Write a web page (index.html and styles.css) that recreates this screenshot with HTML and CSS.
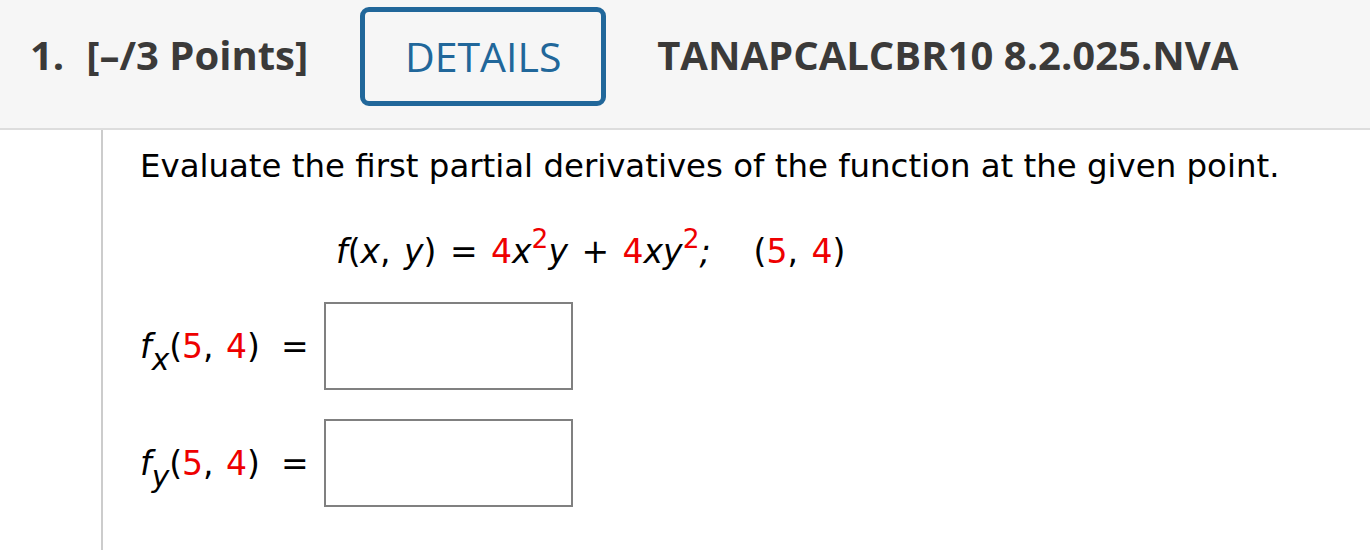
FILE: index.html
```html
<!DOCTYPE html>
<html lang="en">
<head>
<meta charset="utf-8">
<title>Question 1</title>
<link rel="stylesheet" href="styles.css">
</head>
<body>
<header class="qhead">
  <span class="qnum">1.</span>
  <span class="qpts">[–/3 Points]</span>
  <button class="details" type="button">DETAILS</button>
  <span class="qid">TANAPCALCBR10 8.2.025.NVA</span>
</header>
<main class="qbody">
  <div class="gutter"></div>
  <div class="content">
    <p class="prompt">Evaluate the first partial derivatives of the function at the given point.</p>
    <p class="eq"><i>f</i>(<i>x</i>, <i>y</i>) = <span class="red">4</span><i>x</i><sup class="red">2</sup><i>y</i> + <span class="red">4</span><i>xy</i><sup class="red">2</sup><i>;</i><span class="sp"></span>(<span class="red">5</span>, <span class="red">4</span>)</p>
    <div class="answers">
      <div class="row">
        <span class="lbl"><i>f</i><sub><i>x</i></sub>(<span class="red">5</span>, <span class="red">4</span>)</span>
        <span class="eqs">=</span>
        <span class="box"></span>
      </div>
      <div class="row">
        <span class="lbl"><i>f</i><sub><i>y</i></sub>(<span class="red">5</span>, <span class="red">4</span>)</span>
        <span class="eqs">=</span>
        <span class="box"></span>
      </div>
    </div>
  </div>
</main>
</body>
</html>
```

FILE: styles.css
```css
html, body {
  margin: 0;
  padding: 0;
  background: #ffffff;
}

.qhead {
  height: 130px;
  box-sizing: border-box;
  background: #f6f6f6;
  border-bottom: 2px solid #dddddd;
  display: flex;
  align-items: center;
  padding-left: 30px;
  padding-bottom: 16px;
  font-family: "Open Sans", "Liberation Sans", sans-serif;
  font-weight: 700;
  font-size: 40px;
  color: #3b3a39;
}

.qhead > span {
  margin-bottom: 4px;
}

.qnum {
  margin-right: 22px;
}

.qpts {
  margin-right: 52px;
}

.details {
  width: 246px;
  height: 99px;
  box-sizing: border-box;
  border: 5px solid #21679a;
  border-radius: 9px;
  background: #f6f6f6;
  color: #21679a;
  font-family: "Open Sans", "Liberation Sans", sans-serif;
  font-weight: 400;
  font-size: 41px;
  padding: 0;
  margin-right: 51px;
}

.qbody {
  display: flex;
  min-height: 420px;
}

.gutter {
  width: 101px;
  flex: none;
  border-right: 2px solid #cccccc;
}

.content {
  padding-left: 37px;
  padding-top: 16px;
  font-family: "DejaVu Sans", Verdana, sans-serif;
  color: #000;
}

.prompt {
  margin: 0;
  font-size: 32.4px;
  line-height: 40px;
}

.eq {
  margin: 46px 0 0 196px;
  font-size: 33px;
  line-height: 40px;
  word-spacing: 3px;
}

.eq sup {
  font-size: 80%;
  line-height: 0;
  vertical-align: 0.55em;
}

.lbl sub {
  font-size: 90%;
  line-height: 0;
  vertical-align: -0.42em;
}

.eq .sp {
  display: inline-block;
  width: 43px;
}

.red {
  color: #ee0000;
}

.answers {
  margin-top: 30px;
  display: flex;
  flex-direction: column;
  gap: 29px;
}

.row {
  display: flex;
  align-items: center;
}

.lbl {
  font-size: 33px;
  width: 141px;
  word-spacing: 2px;
}

.eqs {
  font-size: 33px;
  width: 43px;
}

.box {
  width: 249px;
  height: 88px;
  box-sizing: border-box;
  border: 2px solid #808080;
  background: #fff;
}
```
